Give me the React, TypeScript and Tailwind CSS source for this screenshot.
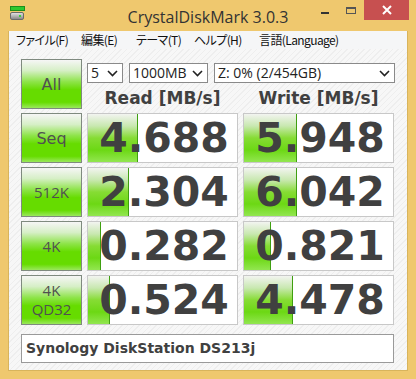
import React from "react";

const rows = [
  { label: ["Seq"], comic: true, read: "4.688", rw: 50, write: "5.948", ww: 53 },
  { label: ["512K"], comic: false, read: "2.304", rw: 41, write: "6.042", ww: 53 },
  { label: ["4K"], comic: false, read: "0.282", rw: 13, write: "0.821", ww: 27 },
  { label: ["4K", "QD32"], comic: false, read: "0.524", rw: 22, write: "4.478", ww: 49 },
];

function Btn({ lines, comic }: { lines: string[]; comic?: boolean }) {
  return (
    <div
      className="w-[61px] h-[50px] border border-[#7f8a7f] flex flex-col items-center justify-center bg-[linear-gradient(to_bottom,#f6f6f6_0%,#d6efc6_22%,#8ee44a_45%,#66dc00_62%,#66dc00_88%,#9ae85c_100%)] text-[#505050] leading-[19px]"
      style={{ fontFamily: comic ? '"Comic Sans MS","DejaVu Sans",sans-serif' : '"Open Sans","Noto Sans",sans-serif' }}
    >
      {lines.map((l) => (
        <span key={l} className={comic ? "text-[16px]" : "text-[15px]"}>
          {l}
        </span>
      ))}
    </div>
  );
}

function Result({ value, w }: { value: string; w: number }) {
  return (
    <div className="relative w-[151px] h-[50px] border border-[#c8c8c8] bg-white overflow-hidden">
      <div
        className="absolute left-0 top-0 bottom-0 border-r border-[#3f9f10] bg-[linear-gradient(to_bottom,#f2f4f0_0%,#c8e8b0_25%,#86dc34_50%,#6cd814_75%,#92e650_100%)]"
        style={{ width: w }}
      />
      <div
        className="relative h-full flex items-center justify-center text-[41px] font-bold text-[#404040] pt-[1px] pl-[3px]"
        style={{ fontFamily: '"DejaVu Sans",Verdana,sans-serif' }}
      >
        {value}
      </div>
    </div>
  );
}

function Select({ w, text }: { w: number; text: string }) {
  return (
    <div
      className="h-[20px] border border-[#8a8a8a] bg-white flex items-center justify-between pl-[3px] pr-[4px] text-[14px] text-[#222]"
      style={{ width: w, fontFamily: '"Open Sans","Noto Sans",sans-serif' }}
    >
      <span className="leading-none">{text}</span>
      <svg width="11" height="7" viewBox="0 0 11 7">
        <path d="M1 1 L5.5 5.5 L10 1" stroke="#222" strokeWidth="1.6" fill="none" />
      </svg>
    </div>
  );
}

export default function App() {
  return (
    <div className="w-[416px] h-[379px] bg-[#efc86e] flex flex-col overflow-hidden">
      {/* title bar */}
      <div className="h-[31px] flex items-start relative">
        <div className="pl-[10px] pt-[6px] flex flex-col items-start gap-[1px]">
          <div className="w-[15px] h-[5px] bg-[#2ec82e] border border-[#1d8f1d]" />
          <div className="w-[14px] h-[8px] rounded-[2px] bg-[linear-gradient(to_bottom,#e0e0e0,#8a8a8a)] border border-[#6a6a6a] relative">
            <div className="absolute right-[2px] top-[2px] w-[2px] h-[2px] bg-[#39d239]" />
          </div>
        </div>
        <div
          className="absolute left-0 right-0 top-[5px] text-center text-[16px] text-[#333]"
          style={{ fontFamily: '"Open Sans","Noto Sans",sans-serif' }}
        >
          CrystalDiskMark 3.0.3
        </div>
        <div className="ml-auto flex items-start">
          <div className="w-[26px] h-[20px] flex items-center justify-center">
            <div className="w-[8px] h-[2px] bg-[#333] mt-[6px]" />
          </div>
          <div className="w-[26px] h-[20px] flex items-center justify-center">
            <div className="w-[10px] h-[7px] border border-[#555] border-t-2" />
          </div>
          <div className="w-[45px] h-[20px] bg-[#c75050] flex items-center justify-center mr-[7px]">
            <svg width="10" height="10" viewBox="0 0 10 10">
              <path d="M1 1 L9 9 M9 1 L1 9" stroke="white" strokeWidth="2" />
            </svg>
          </div>
        </div>
      </div>
      {/* client */}
      <div className="mx-[8px] mb-[8px] flex-1 flex flex-col border-l border-r border-b border-[#d8b45c]">
        <div
          className="h-[18px] bg-[#f5f6f7] flex items-center pl-[7px] text-[12px] tracking-[-0.6px] text-[#111] whitespace-nowrap [font-feature-settings:'palt']"
          style={{ fontFamily: '"Noto Sans CJK JP","Open Sans",sans-serif' }}
        >
          <span className="w-[65px] shrink-0">ファイル(F)</span>
          <span className="w-[55px] shrink-0">編集(E)</span>
          <span className="w-[58px] shrink-0">テーマ(T)</span>
          <span className="w-[65px] shrink-0">ヘルプ(H)</span>
          <span>言語(Language)</span>
        </div>
        <div className="flex-1 bg-[repeating-linear-gradient(135deg,#f7f7f7_0px,#f7f7f7_3px,#eeeeee_3px,#eeeeee_4px)] pl-[12px] pt-[10px] flex flex-col">
          <div className="flex gap-[5px]">
            <Btn lines={["All"]} comic />
            <div className="flex flex-col">
              <div className="flex gap-[6px] mt-[4px]">
                <Select w={36} text="5" />
                <Select w={79} text="1000MB" />
                <Select w={181} text="Z: 0% (2/454GB)" />
              </div>
              <div
                className="flex gap-[5px] mt-[4px] text-[17px] font-bold text-[#404040] leading-[22px]"
                style={{ fontFamily: '"DejaVu Sans",Verdana,sans-serif' }}
              >
                <div className="w-[151px] text-center">Read [MB/s]</div>
                <div className="w-[151px] text-center">Write [MB/s]</div>
              </div>
            </div>
          </div>
          <div className="flex flex-col gap-[4px] mt-[4px]">
            {rows.map((r) => (
              <div key={r.read} className="flex gap-[5px]">
                <Btn lines={r.label} comic={r.comic} />
                <Result value={r.read} w={r.rw} />
                <Result value={r.write} w={r.ww} />
              </div>
            ))}
          </div>
          <div
            className="mt-[9px] w-[373px] h-[29px] border border-[#9a9a9a] bg-white flex items-center pl-[4px] text-[14px] font-bold text-[#404040]"
            style={{ fontFamily: '"DejaVu Sans",Verdana,sans-serif' }}
          >
            Synology DiskStation DS213j
          </div>
        </div>
      </div>
    </div>
  );
}
